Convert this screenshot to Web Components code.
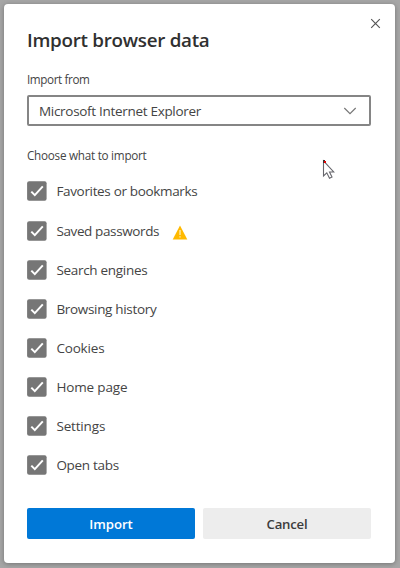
<!DOCTYPE html>
<html lang="en">
<head>
<meta charset="utf-8">
<title>Import browser data</title>
<style>
html, body{
	margin: 0;
	height: 100%;
	overflow: hidden;
}

body{
	background-color: #a6a6a6;
	font-family: 'Open Sans', 'Noto Sans', sans-serif;
	color: #444;
}
</style>
</head>
<body>

<template id="label-template">
<style>
:host{
	display: inline-block;
	white-space: nowrap;
}
</style>
<span><slot></slot></span>
</template>

<template id="dialog-template">
<style>
:host{
	display: block;
	position: relative;
	box-sizing: border-box;
	width: 391px;
	height: 559px;
	margin: 4px 0 0 4px;
	padding: 24px 24px 0 23px;
	background-color: #fff;
	border-radius: 4px;
	box-shadow: 0 1px 5px rgba(0,0,0,0.3);
}

.close{
	position: absolute;
	top: 13.5px;
	right: 14px;
}

h1{
	margin: 0;
	height: 24px;
	font-size: 18.8px;
	font-weight: 600;
	line-height: 24px;
	color: #303030;
}

.footer{
	display: grid;
	grid-template-columns: 168px 168px;
	gap: 8px;
	margin-top: 23.3px;
}

svg{
	display: block;
}
</style>
<svg class="close" width="11" height="11" viewBox="0 0 11 11"><path d="M1.2 1.2 9.8 9.8M9.8 1.2 1.2 9.8" fill="none" stroke="#555" stroke-width="1.15"/></svg>
<h1><slot name="title"></slot></h1>
<slot></slot>
<div class="footer"><slot name="footer"></slot></div>
</template>

<template id="field-template">
<style>
:host{
	display: block;
}

.caption{
	height: 16px;
	font-size: 11.7px;
	line-height: 16px;
}
</style>
<div class="caption"><slot name="caption"></slot></div>
<slot></slot>
</template>

<template id="select-template">
<style>
:host{
	display: flex;
	justify-content: space-between;
	align-items: center;
	box-sizing: border-box;
	height: 31px;
	margin-top: 8px;
	padding: 0 12px 0 10px;
	border: 2px solid #858585;
	border-radius: 2px;
	font-size: 13.5px;
	line-height: 20px;
}
</style>
<slot></slot>
<svg width="14" height="8" viewBox="0 0 14 8"><path d="M1.3 1 7 6.6 12.7 1" fill="none" stroke="#777" stroke-width="1.2"/></svg>
</template>

<template id="check-template">
<style>
:host{
	display: flex;
	align-items: center;
	height: 39.15px;
	font-size: 13.5px;
	line-height: 20px;
}

.box{
	display: block;
	width: 20px;
	height: 20px;
	margin-right: 9.4px;
}
</style>
<svg class="box" viewBox="0 0 20 20"><rect x=".1" y=".2" width="19.5" height="19.5" rx="2" fill="#767676"/><path d="M4.3 10.6 7.8 14.1 15.8 5.4" fill="none" stroke="#fff" stroke-width="2"/></svg>
<slot></slot>
<slot name="icon"></slot>
</template>

<template id="warning-template">
<style>
:host{
	display: block;
	margin: 3px 0 0 13px;
}

svg{
	display: block;
}
</style>
<svg width="16" height="15" viewBox="0 0 16 15"><path d="M8 .5 15.3 14.4H.7Z" fill="#ffb900"/><path d="M8 5v5M8 11.2v1.4" stroke="#fff0c4" stroke-width="1.2"/></svg>
</template>

<template id="button-template">
<style>
:host{
	display: flex;
	justify-content: center;
	align-items: center;
	height: 31px;
	border-radius: 2px;
	background-color: #ededed;
	color: #3c3c3c;
	font-size: 13.2px;
	font-weight: 600;
	line-height: 20px;
}

:host([primary]){
	background-color: #0078d7;
	color: #fff;
}
</style>
<slot></slot>
</template>

<template id="pointer-template">
<style>
:host{
	position: absolute;
	left: 322px;
	top: 159px;
}

svg{
	display: block;
}
</style>
<svg width="14" height="21" viewBox="0 0 14 21"><path d="M1.5 2v15l3.3-3.2 2.7 5.4 2.5-1.2-2.5-5h4.2Z" fill="#fff" stroke="#66666c" stroke-width="1.1"/><path d="M1 1h2v3H1Z" fill="#333"/><path d="M2 2h2v2H2Z" fill="#e00000"/></svg>
</template>

<import-dialog>
	<text-label slot="title" width="182.5">Import browser data</text-label>
	<import-field style="margin-top: 19px">
		<text-label slot="caption" width="62.5">Import from</text-label>
		<select-box><text-label width="162">Microsoft Internet Explorer</text-label></select-box>
	</import-field>
	<import-field style="margin-top: 21px">
		<text-label slot="caption" width="119.5">Choose what to import</text-label>
		<div style="margin-top: 8.9px">
			<check-row><text-label width="141">Favorites or bookmarks</text-label></check-row>
			<check-row><text-label width="102.7">Saved passwords</text-label><warning-icon slot="icon"></warning-icon></check-row>
			<check-row><text-label width="91">Search engines</text-label></check-row>
			<check-row><text-label width="100">Browsing history</text-label></check-row>
			<check-row><text-label width="48">Cookies</text-label></check-row>
			<check-row><text-label width="71">Home page</text-label></check-row>
			<check-row><text-label width="48.8">Settings</text-label></check-row>
			<check-row><text-label width="62.5">Open tabs</text-label></check-row>
		</div>
	</import-field>
	<push-button slot="footer" primary><text-label width="43.5">Import</text-label></push-button>
	<push-button slot="footer"><text-label width="41">Cancel</text-label></push-button>
</import-dialog>
<mouse-pointer></mouse-pointer>

<script>
/* Every element clones the template that is named after it */

class TemplateElement extends HTMLElement {
    constructor(id) {
        super();
        const shadowRoot = this.attachShadow({mode: 'open'});
        const template = document.querySelector(id);
        shadowRoot.appendChild(template.content.cloneNode(true));
    }
}

class ImportDialog extends TemplateElement {
    constructor() { super('#dialog-template'); }
}

class ImportField extends TemplateElement {
    constructor() { super('#field-template'); }
}

class SelectBox extends TemplateElement {
    constructor() { super('#select-template'); }
}

class CheckRow extends TemplateElement {
    constructor() { super('#check-template'); }
}

class WarningIcon extends TemplateElement {
    constructor() { super('#warning-template'); }
}

class PushButton extends TemplateElement {
    constructor() { super('#button-template'); }
}

class MousePointer extends TemplateElement {
    constructor() { super('#pointer-template'); }
}

/* Tracks its text so that it takes up the given width */
class TextLabel extends TemplateElement {
    constructor() { super('#label-template'); }

    connectedCallback() {
        const span = this.shadowRoot.querySelector('span');
        const natural = span.getBoundingClientRect().width;
        const spacing = (this.getAttribute('width') - natural) / this.textContent.length;
        span.style.letterSpacing = spacing + 'px';
    }
}

customElements.define('import-dialog', ImportDialog);
customElements.define('import-field', ImportField);
customElements.define('select-box', SelectBox);
customElements.define('check-row', CheckRow);
customElements.define('warning-icon', WarningIcon);
customElements.define('push-button', PushButton);
customElements.define('mouse-pointer', MousePointer);

/* Defined last, the labels measure themselves in the finished layout */
customElements.define('text-label', TextLabel);
</script>
</body>
</html>
